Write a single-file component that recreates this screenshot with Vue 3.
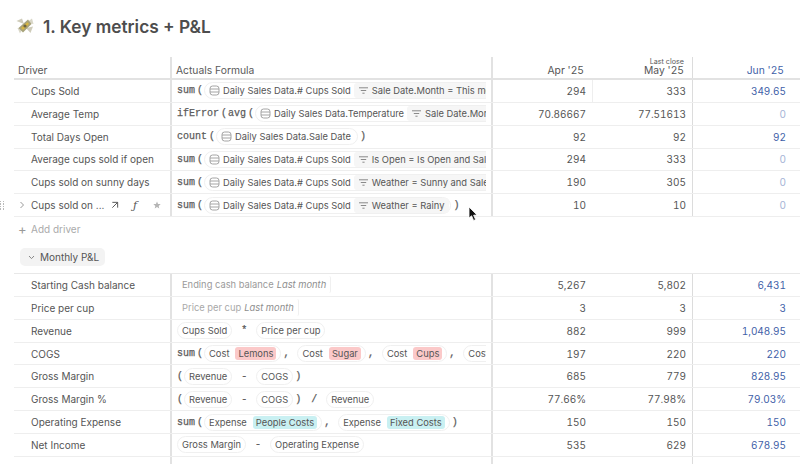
<script setup>
const db = (text, filter) => ({ k: 'db', text, filter })
const fn = (v) => ({ k: 'fn', v })
const open = { k: 'op', v: '(', c: 'paren' }
const close = { k: 'op', v: ')', c: 'paren' }
const comma = { k: 'op', v: ',', c: 'comma' }
const bin = (v) => ({ k: 'op', v, c: 'bin' })
const ref = (v, tag, tone) => ({ k: 'ref', v, tag, tone })
const ghost = (v, em) => ({ k: 'ghost', v, em })

const drivers = [
  { name: 'Cups Sold', f: [fn('sum'), open, db('Daily Sales Data.# Cups Sold', 'Sale Date.Month = This month and Sale')], v: ['294', '333', '349.65'], split: true },
  { name: 'Average Temp', f: [fn('ifError'), open, fn('avg'), open, db('Daily Sales Data.Temperature', 'Sale Date.Month = This month')], v: ['70.86667', '77.51613', '0'] },
  { name: 'Total Days Open', f: [fn('count'), open, db('Daily Sales Data.Sale Date'), close], v: ['92', '92', '92'] },
  { name: 'Average cups sold if open', f: [fn('sum'), open, db('Daily Sales Data.# Cups Sold', 'Is Open = Is Open and Sale Date.Month')], v: ['294', '333', '0'] },
  { name: 'Cups sold on sunny days', f: [fn('sum'), open, db('Daily Sales Data.# Cups Sold', 'Weather = Sunny and Sale Date.Month')], v: ['190', '305', '0'] },
  { name: 'Cups sold on ...', hover: true, f: [fn('sum'), open, db('Daily Sales Data.# Cups Sold', 'Weather = Rainy'), close], v: ['10', '10', '0'] },
]

const pl = [
  { name: 'Starting Cash balance', f: [ghost('Ending cash balance', 'Last month')], v: ['5,267', '5,802', '6,431'] },
  { name: 'Price per cup', f: [ghost('Price per cup', 'Last month')], v: ['3', '3', '3'], faint: true },
  { name: 'Revenue', f: [ref('Cups Sold'), bin('*'), ref('Price per cup')], v: ['882', '999', '1,048.95'] },
  { name: 'COGS', f: [fn('sum'), open, ref('Cost', 'Lemons', 'red'), comma, ref('Cost', 'Sugar', 'red'), comma, ref('Cost', 'Cups', 'red'), comma, ref('Cost', 'Juice', 'red')], v: ['197', '220', '220'] },
  { name: 'Gross Margin', f: [open, ref('Revenue'), bin('-'), ref('COGS'), close], v: ['685', '779', '828.95'] },
  { name: 'Gross Margin %', f: [open, ref('Revenue'), bin('-'), ref('COGS'), close, bin('/'), ref('Revenue')], v: ['77.66%', '77.98%', '79.03%'] },
  { name: 'Operating Expense', f: [fn('sum'), open, ref('Expense', 'People Costs', 'cyan'), comma, ref('Expense', 'Fixed Costs', 'cyan'), close], v: ['150', '150', '150'] },
  { name: 'Net Income', f: [ref('Gross Margin'), bin('-'), ref('Operating Expense')], v: ['535', '629', '678.95'] },
]
</script>

<template>
  <div class="page">
    <h1 class="title">
      <svg class="emoji" width="18" height="18" viewBox="0 0 18 18">
        <path d="M0.5 4 L6 1.5 L8 7 Z" fill="#cfccba" />
        <path d="M10 11 L17 9.5 L14.5 16 Z" fill="#cfccba" />
        <path d="M10 6 L16 1.5 L17.5 7 Z" fill="#d9d7c8" />
        <path d="M1.5 11 L7 11 L4 16.5 Z" fill="#d9d7c8" />
        <path d="M2.5 11 L12 2.5 L15.5 7 L7 15.5 Z" fill="#a8a37a" />
        <path d="M5 11 L11.5 5.2 L13 7 L7 13 Z" fill="#d8b640" />
        <circle cx="9" cy="9" r="1.6" fill="#6d6440" />
      </svg>
      <span>1. Key metrics + P&amp;L</span>
    </h1>

    <div class="row head">
      <div class="cell driver"><span class="head-label">Driver</span></div>
      <div class="cell formula"><span class="head-label">Actuals Formula</span></div>
      <div class="cell num"><span>Apr '25</span></div>
      <div class="cell num may"><small>Last close</small><span>May '25</span></div>
      <div class="cell num jun"><span>Jun '25</span></div>
    </div>

    <div v-for="r in drivers" :key="r.name" class="row">
      <div class="cell driver">
        <span class="caret"><svg v-if="r.hover" width="6" height="8" viewBox="0 0 6 8"><path d="M1.5 1 L4.5 4 L1.5 7" fill="none" stroke="#999" stroke-width="1" /></svg></span>
        <span class="name">{{ r.name }}</span>
        <template v-if="r.hover">
          <svg class="act arrow" width="8" height="8" viewBox="0 0 9 9"><path d="M1.5 1.5 H7.5 V7.5 M7.5 1.5 L1.5 7.5" fill="none" stroke="#555" stroke-width="1.1" /></svg>
          <i class="act fx">ƒ</i>
          <svg class="act star" width="8" height="8" viewBox="0 0 10 10"><path d="M5 .6 L6.3 3.6 L9.6 3.9 L7.1 6.1 L7.9 9.3 L5 7.6 L2.1 9.3 L2.9 6.1 L.4 3.9 L3.7 3.6 Z" fill="#b5b5b5" /></svg>
        </template>
      </div>
      <div class="cell formula">
        <div class="tokens">
          <template v-for="(t, i) in r.f" :key="i">
            <span v-if="t.k === 'fn'" class="fn">{{ t.v }}</span>
            <span v-else-if="t.k === 'op'" class="op" :class="t.c">{{ t.v }}</span>
            <span v-else class="chip db" :class="{ 'has-filter': t.filter }">
              <svg width="11" height="11" viewBox="0 0 11 11" fill="none" stroke="#9a9a9a" stroke-width=".9"><rect x="1" y="1" width="9" height="9" rx="2.6" /><path d="M1 4 H10 M1 7 H10" /></svg>
              <span class="db-text">{{ t.text }}</span>
              <span v-if="t.filter" class="filter">
                <svg width="9" height="7" viewBox="0 0 9 7" stroke="#8a8a8a" stroke-width="1"><path d="M0 .8 H9 M1.8 3.5 H7.2 M3.4 6.2 H5.6" /></svg>
                <span>{{ t.filter }}</span>
              </span>
            </span>
          </template>
        </div>
      </div>
      <div class="cell num" :class="{ split: r.split }">{{ r.v[0] }}</div>
      <div class="cell num may">{{ r.v[1] }}</div>
      <div class="cell num jun" :class="{ zero: r.v[2] === '0' }">{{ r.v[2] }}</div>
    </div>

    <div class="handle" aria-hidden="true"><i v-for="n in 8" :key="n"></i></div>

    <div class="add"><span class="plus">+</span><span>Add driver</span></div>

    <div class="group"><div class="pill">
      <svg width="7" height="5" viewBox="0 0 7 5"><path d="M1 1 L3.5 3.6 L6 1" fill="none" stroke="#888" stroke-width="1" /></svg>
      <span>Monthly P&amp;L</span>
    </div></div>

    <div class="top-rule"></div>
    <div v-for="r in pl" :key="r.name" class="row">
      <div class="cell driver"><span class="caret"></span><span class="name">{{ r.name }}</span></div>
      <div class="cell formula">
        <div class="tokens">
          <template v-for="(t, i) in r.f" :key="i">
            <span v-if="t.k === 'fn'" class="fn">{{ t.v }}</span>
            <span v-else-if="t.k === 'op'" class="op" :class="t.c">{{ t.v }}</span>
            <span v-else-if="t.k === 'ref'" class="chip ref">
              {{ t.v }}<span v-if="t.tag" class="tag" :class="t.tone">{{ t.tag }}</span>
            </span>
            <span v-else class="chip ghost" :class="{ faint: r.faint }">{{ t.v }} <em>{{ t.em }}</em></span>
          </template>
        </div>
      </div>
      <div class="cell num">{{ r.v[0] }}</div>
      <div class="cell num may">{{ r.v[1] }}</div>
      <div class="cell num jun">{{ r.v[2] }}</div>
    </div>
    <div class="row tail">
      <div class="cell driver"></div><div class="cell formula"></div><div class="cell num"></div><div class="cell num may"></div><div class="cell num jun"></div>
    </div>

    <svg class="cursor" width="11" height="16" viewBox="0 0 11 16"><path d="M1 1 V12 L3.6 9.8 L5.6 14.5 L7.6 13.6 L5.6 9.2 L9 9 Z" fill="#111" stroke="#fff" stroke-width=".8" /></svg>
  </div>
</template>

<style>
html, body { margin: 0; background: #fff; }
</style>

<style scoped>
.page {
  position: relative;
  width: 800px;
  height: 464px;
  overflow: hidden;
  background: #fff;
  color: #555;
  font-family: Inter, "Liberation Sans", sans-serif;
  font-size: 10px;
}
.title {
  display: flex;
  align-items: center;
  gap: 9px;
  height: 18px;
  margin: 0;
  padding: 17px 0 22px 16px;
  font-size: 17.3px;
  font-weight: 600;
  color: #4d4d4d;
}
.row {
  display: grid;
  grid-template-columns: 156px 323px 100px 100px 107px;
  height: 22.85px;
  margin-left: 14px;
  border-bottom: 1px solid #eeeeee;
  box-sizing: border-box;
}
.head {
  height: 23px;
  border-bottom: 2px solid #e2e2e2;
}
.cell {
  display: flex;
  align-items: center;
  min-width: 0;
  box-sizing: border-box;
}
.driver { position: relative; }
.head .driver, .head .formula { padding-left: 4px; }
.head .cell { padding-top: 5px; }
.head-label { font-size: 10.3px; color: #5a5a5a; }
.caret { display: inline-flex; width: 17px; padding-left: 5px; box-sizing: border-box; flex: none; }
.name { white-space: nowrap; }
.act { position: absolute; top: 50%; transform: translateY(-50%); }
.arrow { left: 97px; }
.fx { left: 119px; font-family: "DejaVu Serif", serif; font-size: 11px; color: #555; }
.star { left: 139px; }
.formula {
  border-left: 2px solid #e2e2e2;
  border-right: 2px solid #e2e2e2;
  padding: 0 5px;
}
.tokens {
  display: flex;
  align-items: center;
  width: 310px;
  overflow: hidden;
  white-space: nowrap;
  font-size: 9.35px;
}
.fn, .op {
  font-family: "Liberation Mono", monospace;
  font-size: 10px;
  color: #5c5c5c;
  -webkit-text-stroke: .25px #5c5c5c;
  flex: none;
}
.paren { margin: 0 1px 0 2px; }
.tokens > .paren:first-child { margin-left: 0; }
.comma { margin: 0 8px 0 2px; }
.bin { margin: 0 9px; }
.chip {
  display: inline-flex;
  align-items: center;
  flex: none;
  height: 17px;
  border: 1px solid #f0f0f0;
  border-radius: 9px;
  padding: 0 4px;
  box-sizing: border-box;
  color: #555;
}
.db > svg { flex: none; margin-right: 3px; }
.db-text { margin-right: 2px; }
.has-filter { padding-right: 1px; }
.has-filter .db-text { margin-right: 3px; }
.filter {
  display: inline-flex;
  align-items: center;
  gap: 4px;
  background: #f6f6f6;
  border-radius: 3px;
  height: 15px;
  padding: 0 5px;
}
.ref { gap: 6px; }
.tag {
  display: inline-block;
  border-radius: 3px;
  padding: 0 3px;
  height: 13px;
  line-height: 13px;
}
.tag.red { background: #fbc9c9; }
.tag.cyan { background: #c9f0f2; }
.ghost { border-radius: 2px; border-width: 0 1px 0 0; padding-left: 5px; color: #9a9a9a; }
.ghost.faint { color: #a8a8a8; }
.ghost em { font-style: italic; color: #8d8d8d; margin-left: 3px; }
.num {
  justify-content: flex-end;
  padding-right: 7px;
  font-variant-numeric: tabular-nums;
}
.head .num { padding-right: 9px; position: relative; font-size: 10.3px; }
.head .num small {
  position: absolute;
  right: 8px;
  top: 0;
  font-size: 7.2px;
  letter-spacing: 0;
  color: #5a5a5a;
}
.head .may { padding-right: 8px; }
.split { border-right: 1px solid #eeeeee; padding-right: 6px; }
.may { border-right: 1px solid #dcdcdc; padding-right: 6px; }
.jun { color: #3f5fa8; padding-right: 14px; }
.head .jun { padding-right: 16px; }
.zero { color: #a5b4d6; }
.handle {
  position: absolute;
  left: 0;
  top: 201px;
  display: grid;
  grid-template-columns: repeat(2, 2px);
  gap: 1px;
}
.handle i { width: 1.4px; height: 1.4px; background: #b9b9b9; }
.add {
  display: flex;
  align-items: center;
  box-sizing: border-box;
  height: 23px;
  padding: 1px 0 0 18px;
  color: #aaa;
}
.plus { width: 13px; font-size: 13px; color: #999; }
.group { padding: 8px 0 7px 20px; }
.pill {
  display: inline-flex;
  align-items: center;
  vertical-align: top;
  gap: 5px;
  height: 18px;
  padding: 0 6px 0 8px;
  background: #f3f3f3;
  border-radius: 5px;
  box-sizing: border-box;
}
.top-rule { height: 0; margin-left: 14px; border-top: 1px solid #e8e8e8; }
.cursor { position: absolute; left: 468px; top: 206px; }
</style>
